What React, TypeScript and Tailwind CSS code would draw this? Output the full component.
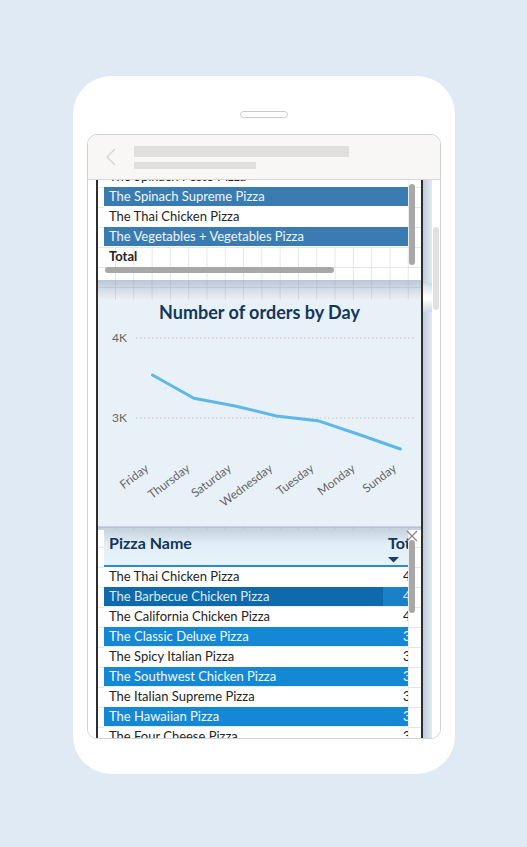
import React from "react";

const days = ["Friday", "Thursday", "Saturday", "Wednesday", "Tuesday", "Monday", "Sunday"];
const ys = [51, 74.3, 82, 92, 96.7, 110.5, 125];
const xs = days.map((_, i) => 54.5 + i * 41.3);

type Row = { name: string; sel?: boolean; num?: string };

const rows2: Row[] = [
  { name: "The Thai Chicken Pizza", num: "4,371" },
  { name: "The Barbecue Chicken Pizza", sel: true, num: "4,193" },
  { name: "The California Chicken Pizza", num: "4,040" },
  { name: "The Classic Deluxe Pizza", sel: true, num: "3,925" },
  { name: "The Spicy Italian Pizza", num: "3,816" },
  { name: "The Southwest Chicken Pizza", sel: true, num: "3,738" },
  { name: "The Italian Supreme Pizza", num: "3,649" },
  { name: "The Hawaiian Pizza", sel: true, num: "3,580" },
  { name: "The Four Cheese Pizza", num: "3,501" },
];

function Chart() {
  return (
    <div className="h-[226px] bg-[#e9f1f8] flex flex-col">
      <div className="h-[24px] pt-[1px] text-center text-[18px] leading-[22px] font-bold text-[#12375c]">
        Number of orders by Day
      </div>
      <svg width="323" height="202" className="block">
        <line x1="38" x2="315.5" y1="14" y2="14" stroke="#c6c6c6" strokeDasharray="1.5 2.5" />
        <line x1="38" x2="315.5" y1="94" y2="94" stroke="#c6c6c6" strokeDasharray="1.5 2.5" />
        <text x="29" y="18.3" textAnchor="end" fontSize="12" fill="#666666">4K</text>
        <text x="29" y="98.3" textAnchor="end" fontSize="12" fill="#666666">3K</text>
        <polyline
          points={xs.map((x, i) => `${x},${ys[i]}`).join(" ")}
          fill="none"
          stroke="#5cb8e6"
          strokeWidth="3"
          strokeLinejoin="round"
          strokeLinecap="round"
        />
        {days.map((d, i) => (
          <text
            key={d}
            transform={`translate(${xs[i] - 3},146) rotate(-37)`}
            textAnchor="end"
            fontSize="12"
            fill="#666666"
          >
            {d}
          </text>
        ))}
      </svg>
    </div>
  );
}

function Table1() {
  const r = [
    { name: "The Spinach Pesto Pizza", sel: false },
    { name: "The Spinach Supreme Pizza", sel: true },
    { name: "The Thai Chicken Pizza", sel: false },
    { name: "The Vegetables + Vegetables Pizza", sel: true },
  ];
  return (
    <div className="mt-[-13px] ml-[6px] w-[313px] flex flex-col">
      <div className="flex">
        <div className="w-[304px] flex flex-col">
          {r.map((x) => (
            <div
              key={x.name}
              className={
                x.sel
                  ? "h-[20px] border-b border-white bg-[#3a7cb2] text-[#f2f6fa] pl-[5px] text-[13px] leading-[19px] whitespace-nowrap"
                  : "h-[20px] bg-white text-[#252423] pl-[5px] text-[13px] leading-[19px] whitespace-nowrap"
              }
            >
              {x.name}
            </div>
          ))}
          <div className="h-[20px] pl-[5px] text-[13px] leading-[19px] font-bold text-[#252423]">Total</div>
        </div>
        <div className="ml-[1px] w-[6px]">
          <div className="mt-[17px] h-[81px] w-[6px] rounded-full bg-[#a8a8a8]" />
        </div>
      </div>
      <div className="ml-[1px] h-[6px] w-[229px] rounded-full bg-[#a8a8a8]" />
    </div>
  );
}

function Table2() {
  return (
    <div className="ml-[6px] w-[313px] relative flex">
      <div className="w-[304px] flex flex-col">
        <div className="h-[35px] w-[304px] overflow-hidden flex bg-[linear-gradient(to_bottom,#c7d4e0,#e2eef7_40%,#e7f3fb)]">
          <div className="w-[284px] shrink-0 pl-[5px] pt-[4px] text-[16px] leading-[18px] font-bold text-[#11355b] whitespace-nowrap">
            Pizza Name
          </div>
          <div className="shrink-0 flex flex-col pt-[4px] text-[16px] leading-[18px] font-bold text-[#11355b] whitespace-nowrap">
            <span>Total Orders</span>
            <svg width="11" height="6" className="mt-[5px]">
              <polygon points="0,0 11,0 5.5,5.5" fill="#1b3f68" />
            </svg>
          </div>
        </div>
        <div className="h-[2px] bg-[#2b8bd3]" />
        {rows2.map((x, i) => (
          <div
            key={x.name}
            className={
              x.sel
                ? i === 1
                  ? "h-[20px] w-[304px] overflow-hidden flex border-b border-[#e6eef5] bg-[#0e6aab] text-[#dfeaf4] text-[13px] leading-[19px] whitespace-nowrap"
                  : "h-[20px] w-[304px] overflow-hidden flex border-b border-[#e6eef5] bg-[#1488d4] text-[#f4f8fc] text-[13px] leading-[19px] whitespace-nowrap"
                : "h-[20px] w-[304px] overflow-hidden flex bg-white text-[#252423] text-[13px] leading-[19px] whitespace-nowrap"
            }
          >
            <div className="w-[279px] shrink-0 pl-[5px]">{x.name}</div>
            <div className={i === 1 ? "w-[60px] shrink-0 pl-[20px] bg-[#1a80c8]" : "w-[60px] shrink-0 pl-[20px]"}>
              {x.num}
            </div>
          </div>
        ))}
      </div>
      <div className="ml-[1px] w-[6px]">
        <div className="mt-[10px] h-[73px] w-[6px] rounded-full bg-[#a8a8a8]" />
      </div>
      <svg width="12" height="12" className="absolute top-[0px] right-[-1px]">
        <path d="M1 1 L11 11 M11 1 L1 11" stroke="#8a8a8a" strokeWidth="1.3" />
      </svg>
    </div>
  );
}

export default function App() {
  return (
    <div className="w-[527px] h-[847px] bg-[#e0eaf4] pt-[76px] pl-[73px] [font-family:'Segoe_UI',Lato,'Liberation_Sans',sans-serif]">
      <div className="w-[382px] h-[698px] bg-white rounded-[38px] pt-[35px] flex flex-col items-center">
        <div className="w-[48px] h-[7px] rounded-full border border-[#c9c9c9] bg-white" />
        <div className="mt-[16px] w-[354px] h-[605px] border border-[#d2d2d2] rounded-[10px] overflow-hidden flex flex-col">
          <div className="h-[45px] shrink-0 bg-[#f8f7f5] border-b border-[#d9d9d9] flex items-start pl-[17px]">
            <svg width="12" height="18" className="mt-[13px]">
              <polyline points="10,1 2,9 10,17" fill="none" stroke="#d4d4d4" strokeWidth="1.4" />
            </svg>
            <div className="ml-[17px] pt-[11px] flex flex-col gap-[5px]">
              <div className="w-[215px] h-[11px] bg-[#e1dfdd]" />
              <div className="w-[122px] h-[7px] bg-[#e1dfdd]" />
            </div>
          </div>
          <div className="flex h-[558px]">
            <div className="w-[8px] bg-white" />
            <div className="w-[2px] bg-[#2e2e2e]" />
            <div className="w-[323px] overflow-hidden flex flex-col bg-white [background-image:linear-gradient(to_right,#e6e6e6_1px,transparent_1px),linear-gradient(to_bottom,#e6e6e6_1px,transparent_1px)] [background-size:18.3px_20px] [background-position:-1.3px_7px]">
              <Table1 />
              <div className="h-[7px] shrink-0" />
              <div className="h-[20px] shrink-0 bg-[linear-gradient(to_bottom,rgba(120,145,178,0.5),rgba(140,162,190,0.15))]" />
              <Chart />
              <div className="h-[4px] shrink-0 bg-[rgba(120,145,178,0.4)]" />
              <Table2 />
            </div>
            <div className="w-[2px] bg-[#2e2e2e]" />
            <div className="w-[9px] flex flex-col">
              <div className="h-[103px] bg-[linear-gradient(to_right,#bfcddb,#e2e9f0)]" />
              <div className="h-[29px] bg-[linear-gradient(to_bottom,#cfdae5,#ffffff_45%,#ffffff_55%,#cfdae5)]" />
              <div className="flex-1 bg-[linear-gradient(to_right,#bfcddb,#e2e9f0)]" />
            </div>
            <div className="w-[1px] bg-white" />
            <div className="w-[6px] bg-white">
              <div className="mt-[47px] h-[83px] w-[6px] rounded-full bg-[#e0e0e0]" />
            </div>
            <div className="w-[1px] bg-white" />
          </div>
        </div>
      </div>
    </div>
  );
}
